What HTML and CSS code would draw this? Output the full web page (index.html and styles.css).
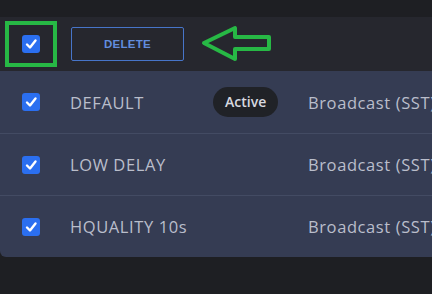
FILE: index.html
```html
<!DOCTYPE html>
<html lang="en">

<head>
    <meta charset="UTF-8">
    <meta name="viewport" content="width=device-width, initial-scale=1.0">
    <title>Profiles</title>
    <link rel="stylesheet" href="styles.css">
</head>

<body>
    <div class="toolbar">
        <div class="highlight">
            <span class="check"><svg viewBox="0 0 18 18"><path d="M5 9.5l3 3 5.5-7"/></svg></span>
        </div>
        <button class="delete">DELETE</button>
        <svg class="arrow" width="74" height="40" viewBox="0 0 74 40">
            <polygon points="4,18 35,3 35,12 69,12 69,24 35,24 35,34"/>
        </svg>
    </div>

    <div class="list">
        <div class="row">
            <span class="check"><svg viewBox="0 0 18 18"><path d="M5 9.5l3 3 5.5-7"/></svg></span>
            <span class="name">DEFAULT</span>
            <span class="status"><span class="pill">Active</span></span>
            <span class="type">Broadcast (SST)</span>
        </div>
        <div class="row">
            <span class="check"><svg viewBox="0 0 18 18"><path d="M5 9.5l3 3 5.5-7"/></svg></span>
            <span class="name">LOW DELAY</span>
            <span class="status"></span>
            <span class="type">Broadcast (SST)</span>
        </div>
        <div class="row">
            <span class="check"><svg viewBox="0 0 18 18"><path d="M5 9.5l3 3 5.5-7"/></svg></span>
            <span class="name">HQUALITY 10s</span>
            <span class="status"></span>
            <span class="type">Broadcast (SST)</span>
        </div>
    </div>
</body>

</html>
```

FILE: styles.css
```css
html {
    overflow: hidden;
}

body {
    margin: 0;
    padding-top: 17px;
    background: #1e1f23;
    font-family: "Open Sans", "Liberation Sans", sans-serif;
}

/* Top action bar */

.toolbar {
    display: flex;
    align-items: center;
    height: 54px;
    background: #26272e;
}

.highlight {
    display: flex;
    align-items: center;
    justify-content: center;
    width: 44px;
    height: 38px;
    margin-left: 5px;
    border: 4px solid #27b845;
}

.check {
    display: inline-flex;
    flex-shrink: 0;
    width: 18px;
    height: 18px;
    border-radius: 3px;
    background: #2b6ff0;
}

.check svg {
    width: 18px;
    height: 18px;
    fill: none;
    stroke: #fff;
    stroke-width: 2.4;
    stroke-linecap: round;
    stroke-linejoin: round;
}

.delete {
    margin-left: 14px;
    width: 113px;
    height: 34px;
    background: transparent;
    border: 1px solid #4775c9;
    border-radius: 2px;
    color: #628dde;
    font-family: "Liberation Sans", sans-serif;
    font-weight: bold;
    font-size: 11.5px;
    letter-spacing: 0.3px;
}

.arrow {
    margin-left: 16px;
    margin-top: 2px;
}

.arrow polygon {
    fill: none;
    stroke: #27b845;
    stroke-width: 4;
    stroke-linejoin: round;
}

/* Profile rows */

.list {
    background: #353c53;
    border-bottom-left-radius: 6px;
}

.row {
    display: flex;
    align-items: center;
    height: 62px;
    border-top: 1px solid #434b63;
    box-sizing: border-box;
    white-space: nowrap;
}

.row:first-child {
    border-top: none;
}

.row .check {
    margin-left: 22px;
}

.name {
    flex-shrink: 0;
    margin-left: 30px;
    width: 143px;
    font-size: 16.5px;
    letter-spacing: 0.6px;
    color: #babecb;
}

.status {
    flex-shrink: 0;
    width: 95px;
}

.pill {
    display: inline-block;
    padding: 0 12px;
    height: 30px;
    line-height: 30px;
    border-radius: 15px;
    background: #202227;
    color: #d8dae0;
    font-size: 14px;
    font-weight: 600;
}

.type {
    font-size: 16.5px;
    letter-spacing: 0.6px;
    color: #babecb;
}
```
